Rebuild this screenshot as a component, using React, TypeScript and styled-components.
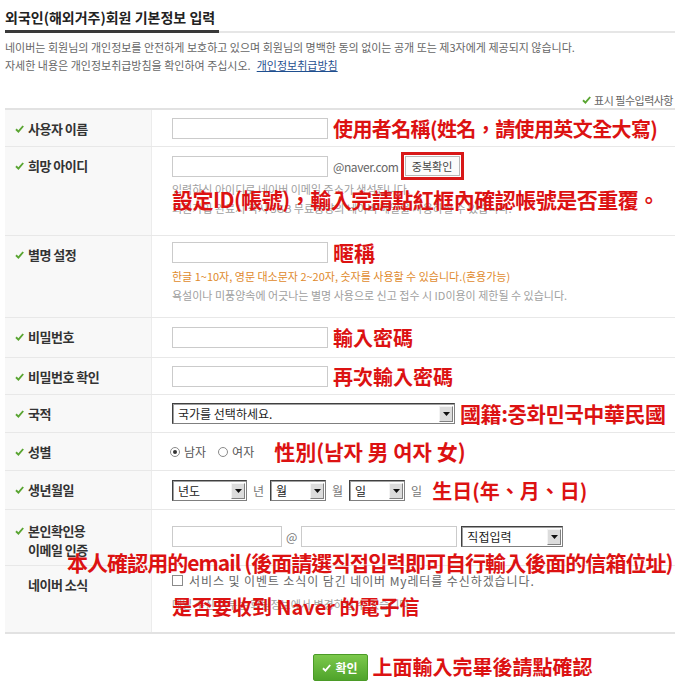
import styled, { createGlobalStyle } from "styled-components";

const GlobalStyle = createGlobalStyle`
  html, body {
    margin: 0;
    padding: 0;
    background: #fff;
  }
  body {
    font-family: "Noto Sans CJK KR", "Noto Sans", sans-serif;
    color: #333;
  }
`;

const Page = styled.div`
  width: 670px;
  padding: 8px 5px 0;
`;

const TitleBar = styled.div`
  display: flex;
  align-items: flex-end;
`;

const Title = styled.h1`
  margin: 0;
  padding: 0 4px 4px 0;
  font-size: 14px;
  font-weight: 700;
  line-height: 18px;
  color: #222;
  border-bottom: 3px solid #3a3a3a;
`;

const TitleRule = styled.div`
  flex: 1;
  border-bottom: 2px solid #e6e6e6;
`;

const Intro = styled.p`
  margin: 5px 0 0;
  font-size: 11px;
  line-height: 18px;
  color: #666;
`;

const PolicyLink = styled.a`
  margin-left: 6px;
  color: #1f4f8f;
  text-decoration: underline;
`;

const RequiredNote = styled.div`
  margin-top: 19px;
  display: flex;
  justify-content: flex-end;
  align-items: center;
  gap: 3px;
  padding-right: 2px;
  font-size: 11px;
  line-height: 14px;
  color: #666;
  letter-spacing: -0.5px;
`;

const FormTable = styled.div`
  margin-top: 1px;
  border-top: 2px solid #e2e2e2;
  border-bottom: 2px solid #e2e2e2;
`;

const Row = styled.div`
  position: relative;
  display: grid;
  grid-template-columns: 147px 1fr;
  border-top: 1px solid #e8e8e8;

  &:first-child {
    border-top: none;
  }
`;

const LabelCell = styled.div<{ $pt?: number; $lh?: number }>`
  display: flex;
  align-items: flex-start;
  gap: 4px;
  padding: ${p => p.$pt ?? 8}px 0 0 10px;
  background: #f8f8f8;
  border-right: 1px solid #ececec;
  font-size: 13px;
  font-weight: 700;
  letter-spacing: -0.5px;
  line-height: ${p => p.$lh ?? 21}px;
  color: #333;
`;

const CheckSlot = styled.span<{ $lh?: number }>`
  display: flex;
  align-items: center;
  width: 9px;
  height: ${p => p.$lh ?? 21}px;
`;

const ValueCell = styled.div<{ $pt?: number; $pb?: number }>`
  padding: ${p => p.$pt ?? 8}px 0 ${p => p.$pb ?? 8}px 20px;
  font-size: 12px;
  color: #333;
`;

const Line = styled.div<{ $gap?: number }>`
  display: flex;
  align-items: center;
  gap: ${p => p.$gap ?? 5}px;
  min-height: 21px;
`;

const TextInput = styled.input<{ $w?: number }>`
  box-sizing: border-box;
  width: ${p => p.$w ?? 156}px;
  height: 21px;
  margin: 0;
  padding: 0 4px;
  border: 1px solid #cbcbcb;
  background: #fff;
  font: inherit;
  outline: none;
`;

const Domain = styled.span`
  padding: 0 2px 0 5px;
  font-size: 12px;
  letter-spacing: -0.4px;
  color: #666;
`;

const RedFrame = styled.div`
  display: flex;
  padding: 1px;
  border: 3px solid #d81818;
`;

const SmallButton = styled.button`
  width: 55px;
  height: 20px;
  padding: 0;
  border: 1px solid #b8b8b8;
  background: #fbfbfb;
  font-family: inherit;
  font-size: 11px;
  color: #444;
`;

const Help = styled.p<{ $tone?: "gray" | "orange" }>`
  margin: 0;
  font-size: 11px;
  line-height: 19px;
  color: ${p => (p.$tone === "orange" ? "#e08a2c" : "#a0a0a0")};
`;

const HelpBlock = styled.div<{ $mt?: number }>`
  margin-top: ${p => p.$mt ?? 0}px;
`;

const Note = styled.span<{ $size?: number; $ls?: number; $ml?: number }>`
  margin-left: ${p => p.$ml ?? 0}px;
  font-family: "Noto Sans CJK TC", "Noto Sans CJK KR", sans-serif;
  font-size: ${p => p.$size ?? 20}px;
  font-weight: 700;
  line-height: 1;
  letter-spacing: ${p => p.$ls ?? 0}px;
  color: #dc1212;
  white-space: nowrap;
`;

const OverlayNote = styled(Note)<{ $top: number; $left: number }>`
  position: absolute;
  top: ${p => p.$top}px;
  left: ${p => p.$left}px;
  z-index: 1;
`;

const SelectBox = styled.div<{ $w: number }>`
  box-sizing: border-box;
  display: flex;
  align-items: center;
  justify-content: space-between;
  width: ${p => p.$w}px;
  height: 21px;
  padding: 0 1px 0 5px;
  border: 1px solid #7f7f7f;
  border-top-color: #404040;
  border-left-color: #404040;
  box-shadow: inset 1px 1px 0 #a0a0a0;
  background: #fff;
  font-size: 12px;
  color: #222;
`;

const SelectArrow = styled.span`
  box-sizing: border-box;
  display: flex;
  align-items: center;
  justify-content: center;
  width: 14px;
  height: 16px;
  background: #dcdcdc;
  border: 1px solid;
  border-color: #f4f4f4 #808080 #808080 #f4f4f4;
`;

const Unit = styled.span`
  font-size: 12px;
  color: #777;
`;

const Choice = styled.label`
  display: flex;
  align-items: center;
  gap: 4px;
  font-size: 12px;
  color: #555;

  &:first-child {
    margin-left: -2px;
  }
`;

const Radio = styled.span<{ $on?: boolean }>`
  box-sizing: border-box;
  display: flex;
  align-items: center;
  justify-content: center;
  width: 10px;
  height: 10px;
  border: 1px solid #8a8a8a;
  border-radius: 50%;

  &::after {
    content: "";
    width: 4px;
    height: 4px;
    border-radius: 50%;
    background: ${p => (p.$on ? "#333" : "transparent")};
  }
`;

const Box = styled.span`
  box-sizing: border-box;
  width: 11px;
  height: 11px;
  border: 1px solid #8a8a8a;
  background: #fff;
`;

const Consent = styled.span`
  font-size: 12px;
  letter-spacing: 0.9px;
  color: #666;
`;

const ButtonRow = styled.div`
  display: flex;
  justify-content: center;
  margin-top: 20px;
`;

const ButtonWrap = styled.div`
  position: relative;
`;

const ConfirmButton = styled.button`
  display: flex;
  align-items: center;
  justify-content: center;
  gap: 4px;
  width: 55px;
  height: 27px;
  padding: 0;
  border: 1px solid #4b9b27;
  border-radius: 2px;
  background: linear-gradient(#7cc94c, #4fa32b);
  color: #fff;
  font-family: inherit;
  font-size: 12px;
  font-weight: 700;
`;

const ButtonNote = styled(Note)`
  position: absolute;
  left: calc(100% + 5px);
  top: 50%;
  transform: translateY(-55%);
`;

const Check = ({ color = "#5aa532" }: { color?: string }) => (
  <svg width="9" height="8" viewBox="0 0 9 8">
    <path d="M1 4.3 L3.4 6.6 L8.2 1" fill="none" stroke={color} strokeWidth="1.9" />
  </svg>
);

const ArrowDown = () => (
  <svg width="7" height="4" viewBox="0 0 7 4">
    <path d="M0 0 H7 L3.5 4 Z" fill="#111" />
  </svg>
);

const Select = ({ w, text }: { w: number; text: string }) => (
  <SelectBox $w={w}>
    <span>{text}</span>
    <SelectArrow>
      <ArrowDown />
    </SelectArrow>
  </SelectBox>
);

const Label = ({ text, check = true, pt, lh }: { text: React.ReactNode; check?: boolean; pt?: number; lh?: number }) => (
  <LabelCell $pt={pt} $lh={lh}>
    <CheckSlot $lh={lh}>{check && <Check />}</CheckSlot>
    <span>{text}</span>
  </LabelCell>
);

export default function App() {
  return (
    <Page>
      <GlobalStyle />
      <TitleBar>
        <Title>외국인(해외거주)회원 기본정보 입력</Title>
        <TitleRule />
      </TitleBar>
      <Intro>
        네이버는 회원님의 개인정보를 안전하게 보호하고 있으며 회원님의 명백한 동의 없이는 공개 또는 제3자에게 제공되지 않습니다.
        <br />
        자세한 내용은 개인정보취급방침을 확인하여 주십시오.
        <PolicyLink href="#">개인정보취급방침</PolicyLink>
      </Intro>
      <RequiredNote>
        <Check />
        표시 필수입력사항
      </RequiredNote>

      <FormTable>
        <Row>
          <Label text="사용자 이름" />
          <ValueCell $pb={7}>
            <Line>
              <TextInput />
              <Note $ls={-0.6}>使用者名稱(姓名，請使用英文全大寫)</Note>
            </Line>
          </ValueCell>
        </Row>

        <Row>
          <Label text="희망 아이디" />
          <ValueCell $pt={5} $pb={17}>
            <Line $gap={0}>
              <TextInput />
              <Domain>@naver.com</Domain>
              <RedFrame>
                <SmallButton>중복확인</SmallButton>
              </RedFrame>
            </Line>
            <HelpBlock>
              <Help>입력하신 아이디로 네이버 이메일 주소가 생성됩니다.</Help>
              <Help>회원가입 완료시 즉시 3GB 무료용량의 네이버 메일을 사용하실 수 있습니다.</Help>
            </HelpBlock>
          </ValueCell>
          <OverlayNote $size={21} $ls={-0.5} $top={42} $left={167}>
            設定ID(帳號)，輸入完請點紅框內確認帳號是否重覆。
          </OverlayNote>
        </Row>

        <Row>
          <Label text="별명 설정" />
          <ValueCell $pt={6} $pb={12}>
            <Line>
              <TextInput />
              <Note $size={21}>暱稱</Note>
            </Line>
            <HelpBlock $mt={4}>
              <Help $tone="orange">한글 1~10자, 영문 대소문자 2~20자, 숫자를 사용할 수 있습니다.(혼용가능)</Help>
              <Help>욕설이나 미풍양속에 어긋나는 별명 사용으로 신고 접수 시 ID이용이 제한될 수 있습니다.</Help>
            </HelpBlock>
          </ValueCell>
        </Row>

        <Row>
          <Label text="비밀번호" />
          <ValueCell $pt={9} $pb={9}>
            <Line>
              <TextInput type="password" />
              <Note>輸入密碼</Note>
            </Line>
          </ValueCell>
        </Row>

        <Row>
          <Label text="비밀번호 확인" />
          <ValueCell $pb={7}>
            <Line>
              <TextInput type="password" />
              <Note>再次輸入密碼</Note>
            </Line>
          </ValueCell>
        </Row>

        <Row>
          <Label text="국적" />
          <ValueCell>
            <Line>
              <Select w={283} text="국가를 선택하세요." />
              <Note $size={21} $ls={-0.4}>國籍:중화민국中華民國</Note>
            </Line>
          </ValueCell>
        </Row>

        <Row>
          <Label text="성별" />
          <ValueCell>
            <Line $gap={12}>
              <Choice>
                <Radio $on />
                남자
              </Choice>
              <Choice>
                <Radio />
                여자
              </Choice>
              <Note $size={21} $ml={8}>性別(남자 男 여자 女)</Note>
            </Line>
          </ValueCell>
        </Row>

        <Row>
          <Label text="생년월일" />
          <ValueCell $pt={9} $pb={8}>
            <Line $gap={6}>
              <Select w={75} text="년도" />
              <Unit>년</Unit>
              <Select w={56} text="월" />
              <Unit>월</Unit>
              <Select w={56} text="일" />
              <Unit>일</Unit>
              <Note $ml={4}>生日(年、月、日)</Note>
            </Line>
          </ValueCell>
        </Row>

        <Row>
          <Label
            pt={11}
            lh={19}
            text={
              <>
                본인확인용
                <br />
                이메일 인증
              </>
            }
          />
          <ValueCell $pt={16} $pb={18}>
            <Line $gap={4}>
              <TextInput $w={110} />
              <Unit>@</Unit>
              <TextInput />
              <Select w={102} text="직접입력" />
            </Line>
          </ValueCell>
          <OverlayNote $size={21} $ls={-0.95} $top={42} $left={62}>
            本人確認用的email (後面請選직접입력即可自行輸入後面的信箱位址)
          </OverlayNote>
        </Row>

        <Row>
          <Label text="네이버 소식" check={false} />
          <ValueCell $pt={4} $pb={18}>
            <Line $gap={6}>
              <Box />
              <Consent>서비스 및 이벤트 소식이 담긴 네이버 My레터를 수신하겠습니다.</Consent>
            </Line>
            <HelpBlock $mt={4}>
              <Help>메일 수신 여부는 회원정보에서 변경하실 수 있습니다.</Help>
            </HelpBlock>
          </ValueCell>
          <OverlayNote $top={31} $left={167}>
            是否要收到 Naver 的電子信
          </OverlayNote>
        </Row>
      </FormTable>

      <ButtonRow>
        <ButtonWrap>
          <ConfirmButton>
            <Check color="#fff" />
            확인
          </ConfirmButton>
          <ButtonNote>上面輸入完畢後請點確認</ButtonNote>
        </ButtonWrap>
      </ButtonRow>
    </Page>
  );
}
